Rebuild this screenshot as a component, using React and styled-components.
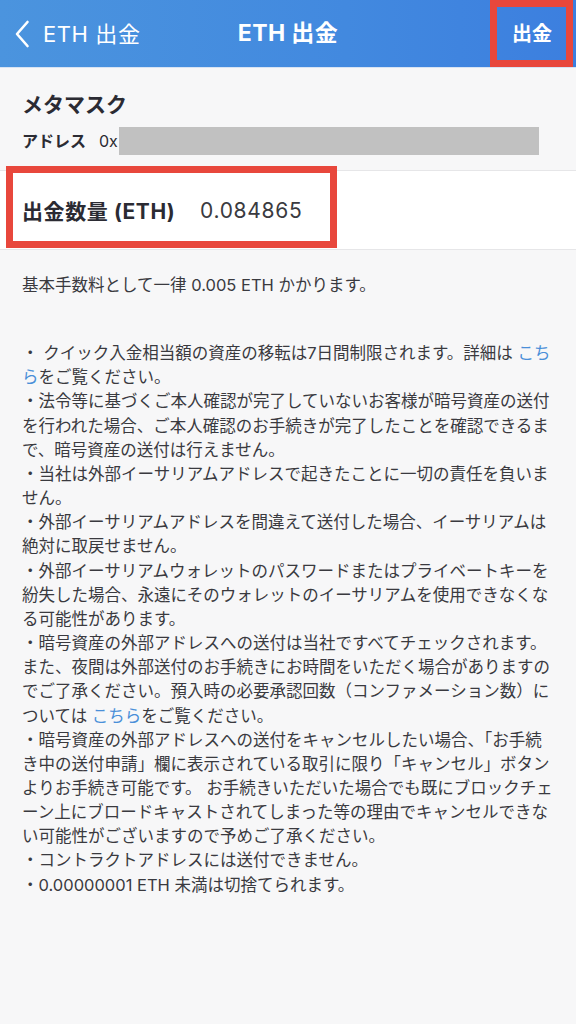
import React from "react";
import styled, { createGlobalStyle } from "styled-components";

const Global = createGlobalStyle`
  html, body { margin: 0; padding: 0; background: #f7f7f8; }
  body { font-family: Inter, "Noto Sans CJK JP", sans-serif; color: #333; }
  * { box-sizing: border-box; }
`;

const Page = styled.div`
  width: 576px;
  min-height: 1024px;
  background: #f7f7f8;
  position: relative;
`;

const Header = styled.header`
  height: 68px;
  background: linear-gradient(90deg, #4b94de 0%, #4289df 60%, #3c7fdf 100%);
  border-bottom: 1px solid #d7e3f3;
  display: grid;
  grid-template-columns: 1fr auto 1fr;
  align-items: center;
  color: #fff;
  position: relative;
`;

const Back = styled.div`
  display: flex;
  align-items: center;
  gap: 13px;
  padding-left: 14px;
  font-size: 22px;
  letter-spacing: 0.6px;
  line-height: 1;
`;

const Title = styled.div`
  font-size: 23px;
  font-weight: 700;
  letter-spacing: 0.4px;
  line-height: 1;
`;

const Action = styled.div`
  justify-self: end;
  padding-right: 24px;
  font-size: 20px;
  font-weight: 700;
  line-height: 1;
`;

const Highlight = styled.div`
  position: absolute;
  border: 7px solid #e8473c;
  pointer-events: none;
  left: ${(p) => p.$l}px;
  top: ${(p) => p.$t}px;
  width: ${(p) => p.$w}px;
  height: ${(p) => p.$h}px;
`;

const Account = styled.section`
  height: 102px;
  padding: 23px 22px 0;
  display: flex;
  flex-direction: column;
  gap: 8px;
`;

const AccountName = styled.div`
  font-size: 21px;
  font-weight: 700;
  line-height: 28px;
  color: #2b2b33;
`;

const AddressRow = styled.div`
  display: flex;
  align-items: center;
  font-size: 16px;
  line-height: 28px;
  color: #2b2b33;
`;

const AddressLabel = styled.span`
  font-weight: 700;
  margin-right: 13px;
`;

const Masked = styled.span`
  display: block;
  height: 28px;
  width: 420px;
  margin-left: 1px;
  background: #c1c1c1;
`;

const AmountRow = styled.section`
  height: 80px;
  background: #fff;
  border-top: 1px solid #e6e6e8;
  border-bottom: 1px solid #e6e6e8;
  display: flex;
  align-items: center;
  padding: 0 22px;
  font-size: 21px;
  color: #2b2b33;
`;

const AmountLabel = styled.span`
  font-weight: 700;
  letter-spacing: 0.6px;
  width: 178px;
`;

const AmountValue = styled.span`
  color: #3a3a40;
  letter-spacing: 0.7px;
`;

const Notes = styled.section`
  padding: 23px 22px 0;
  font-size: 16.5px;
  line-height: 24.15px;
  color: #3a3a3f;
`;

const Fee = styled.p`
  margin: 0 0 44px;
`;

const Item = styled.p`
  margin: 0;
`;

const Link = styled.span`
  color: #4a8fd8;
`;

export default function App() {
  return (
    <Page>
      <Global />
      <Header>
        <Back>
          <svg width="16" height="28" viewBox="0 0 16 28" fill="none">
            <path d="M13.5 2 L3 14 L13.5 26" stroke="#fff" strokeWidth="2.6" strokeLinecap="round" strokeLinejoin="round" />
          </svg>
          <span>ETH 出金</span>
        </Back>
        <Title>ETH 出金</Title>
        <Action>出金</Action>
      </Header>
      <Account>
        <AccountName>メタマスク</AccountName>
        <AddressRow>
          <AddressLabel>アドレス</AddressLabel>
          <span>0x</span>
          <Masked />
        </AddressRow>
      </Account>
      <AmountRow>
        <AmountLabel>出金数量 (ETH)</AmountLabel>
        <AmountValue>0.084865</AmountValue>
      </AmountRow>
      <Notes>
        <Fee>基本手数料として一律 0.005 ETH かかります。</Fee>
        <Item>
          ・ クイック入金相当額の資産の移転は7日間制限されます。詳細は <Link>こちら</Link>をご覧ください。
        </Item>
        <Item>
          ・法令等に基づくご本人確認が完了していないお客様が暗号資産の送付を行われた場合、ご本人確認のお手続きが完了したことを確認できるまで、暗号資産の送付は行えません。
        </Item>
        <Item>・当社は外部イーサリアムアドレスで起きたことに一切の責任を負いません。</Item>
        <Item>・外部イーサリアムアドレスを間違えて送付した場合、イーサリアムは絶対に取戻せません。</Item>
        <Item>
          ・外部イーサリアムウォレットのパスワードまたはプライベートキーを紛失した場合、永遠にそのウォレットのイーサリアムを使用できなくなる可能性があります。
        </Item>
        <Item>
          ・暗号資産の外部アドレスへの送付は当社ですべてチェックされます。また、夜間は外部送付のお手続きにお時間をいただく場合がありますのでご了承ください。預入時の必要承認回数（コンファメーション数）については <Link>こちら</Link>をご覧ください。
        </Item>
        <Item>
          ・暗号資産の外部アドレスへの送付をキャンセルしたい場合、「お手続き中の送付申請」欄に表示されている取引に限り「キャンセル」ボタンよりお手続き可能です。 お手続きいただいた場合でも既にブロックチェーン上にブロードキャストされてしまった等の理由でキャンセルできない可能性がございますので予めご了承ください。
        </Item>
        <Item>・コントラクトアドレスには送付できません。</Item>
        <Item>・0.00000001 ETH 未満は切捨てられます。</Item>
      </Notes>
      <Highlight $l={490} $t={0} $w={83} $h={67} />
      <Highlight $l={6} $t={166} $w={331} $h={82} />
    </Page>
  );
}
